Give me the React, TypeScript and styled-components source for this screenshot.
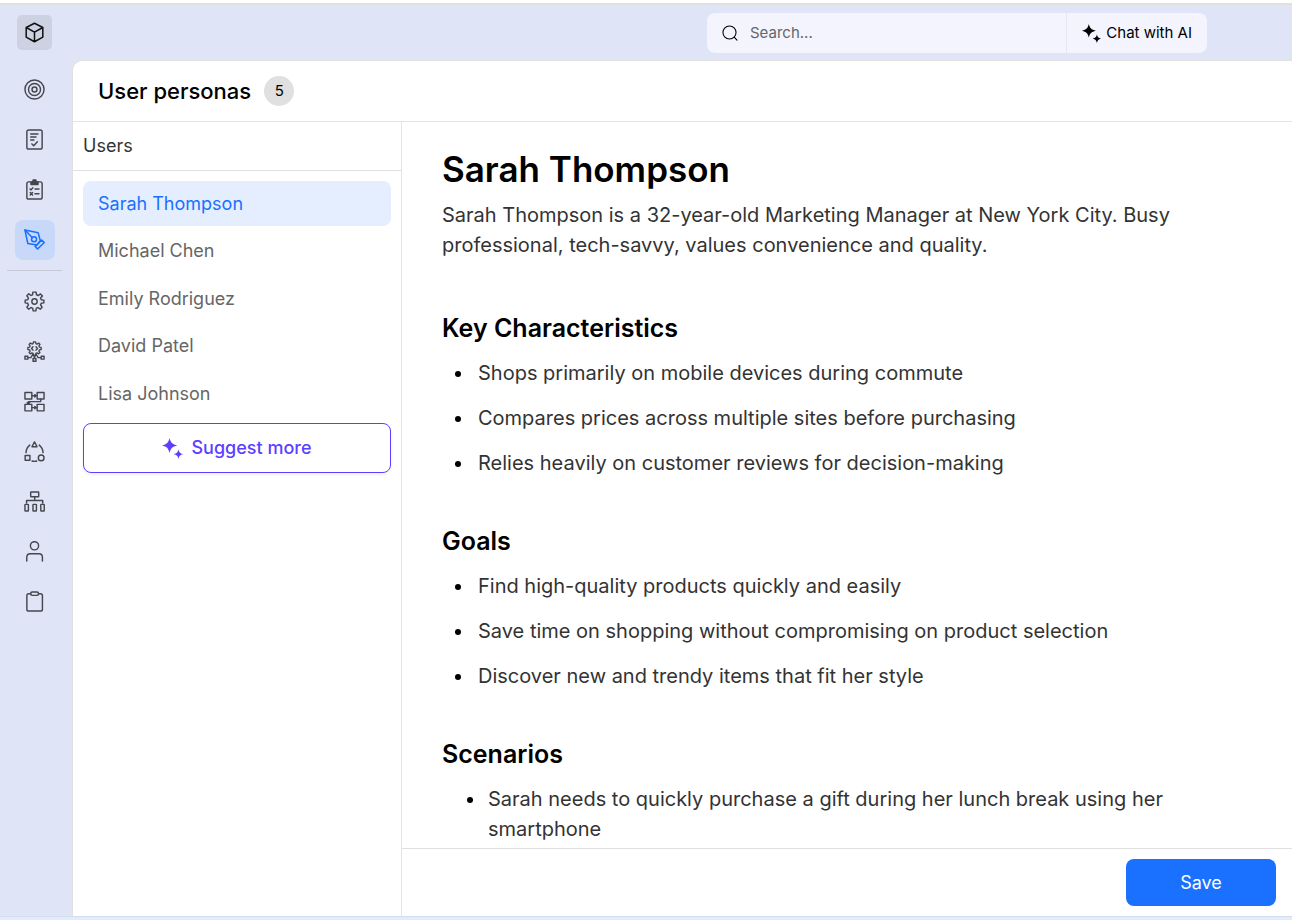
import React, { useState } from "react";
import styled, { createGlobalStyle } from "styled-components";

const GlobalStyle = createGlobalStyle`
  *, *::before, *::after { box-sizing: border-box; }
  body {
    margin: 0;
    background: #ffffff;
    font-family: Inter, "Liberation Sans", sans-serif;
    color: #000000;
  }
  button, input { font-family: inherit; }
`;

const Page = styled.div`
  display: flex;
  flex-direction: column;
  height: 100vh;
  border-top: 3px solid #ffffff;
  border-bottom: 3px solid #e3ecf8;
`;

const Shell = styled.div`
  flex: 1;
  min-height: 0;
  display: flex;
  background: #dfe4f6;
  border-top: 2px solid #e0e0e0;
  border-bottom: 1px solid #d3dcee;
`;

const Sidebar = styled.nav`
  flex: none;
  width: 72px;
  padding: 10px 10px 0 7px;
  display: flex;
  flex-direction: column;
  align-items: center;
`;

const LogoButton = styled.button`
  display: grid;
  place-items: center;
  width: 35px;
  height: 35px;
  margin-bottom: 20px;
  padding: 0;
  border: 0;
  border-radius: 5px;
  background: #cdd2e3;
  color: #111111;
`;

const NavList = styled.div`
  display: flex;
  flex-direction: column;
  align-items: center;
  gap: 10px;
`;

const NavButton = styled.button<{ $active?: boolean }>`
  display: grid;
  place-items: center;
  width: 40px;
  height: 40px;
  padding: 0 1px 1px 0;
  border: 0;
  border-radius: 8px;
  background: ${(p) => (p.$active ? "#c8d8f9" : "transparent")};
  color: ${(p) => (p.$active ? "#1a70ff" : "#44474d")};
  cursor: pointer;
`;

const NavDivider = styled.hr`
  width: 55px;
  height: 1px;
  margin: 10px 0 11px;
  border: 0;
  background: #c8cada;
`;

const Column = styled.div`
  flex: 1;
  min-width: 0;
  display: flex;
  flex-direction: column;
`;

const TopBar = styled.header`
  flex: none;
  height: 55px;
  padding: 8px 85px 0 0;
  display: flex;
  justify-content: flex-end;
  align-items: flex-start;
`;

const SearchGroup = styled.div`
  display: flex;
  width: 500px;
  height: 40px;
  border-radius: 8px;
  background: #f3f4fe;
  overflow: hidden;
`;

const SearchLabel = styled.label`
  flex: 1;
  display: flex;
  align-items: center;
  gap: 12px;
  padding-left: 15px;
`;

const SearchInput = styled.input`
  flex: 1;
  min-width: 0;
  padding: 0;
  border: 0;
  outline: 0;
  background: transparent;
  font-size: 15px;
  line-height: 20px;
  color: #222222;
  &::placeholder { color: #666666; opacity: 1; }
`;

const ChatButton = styled.button`
  display: flex;
  align-items: center;
  gap: 5px;
  padding: 0 15px;
  border: 0;
  border-left: 1px solid #e4e6f3;
  background: transparent;
  font-size: 15px;
  line-height: 20px;
  color: #000000;
  cursor: pointer;
`;

const Panel = styled.main`
  flex: 1;
  min-height: 0;
  display: flex;
  flex-direction: column;
  background: #ffffff;
  border-top: 1px solid #e0e0e0;
  border-left: 1px solid #e0e0e0;
  border-top-left-radius: 10px;
`;

const PanelHeader = styled.div`
  flex: none;
  display: flex;
  align-items: center;
  gap: 13px;
  height: 61px;
  padding-left: 25px;
  border-bottom: 1px solid #e4e4e4;
`;

const PanelTitle = styled.h2`
  margin: 0;
  font-size: 22px;
  line-height: 30px;
  font-weight: 500;
`;

const Count = styled.span`
  display: grid;
  place-items: center;
  width: 30px;
  height: 30px;
  border-radius: 50%;
  background: #e0e0e0;
  font-size: 15px;
  line-height: 20px;
`;

const Split = styled.div`
  flex: 1;
  min-height: 0;
  display: flex;
`;

const UserPane = styled.aside`
  flex: none;
  width: 329px;
  border-right: 1px solid #e4e4e4;
`;

const UserPaneTitle = styled.h3`
  height: 49px;
  margin: 0;
  padding: 0 10px;
  border-bottom: 1px solid #e0e0e0;
  font-size: 18px;
  line-height: 48px;
  font-weight: 400;
  color: #333333;
`;

const UserPaneBody = styled.div`
  display: flex;
  flex-direction: column;
  gap: 7px;
  padding: 10px;
`;

const UserList = styled.div`
  display: flex;
  flex-direction: column;
  justify-content: space-between;
  height: 235px;
`;

const UserItem = styled.button<{ $active: boolean }>`
  width: 100%;
  height: 45px;
  padding: 0 15px;
  border: 0;
  border-radius: 8px;
  background: ${(p) => (p.$active ? "#e4eeff" : "transparent")};
  color: ${(p) => (p.$active ? "#1a70ff" : "#666666")};
  font-size: 18px;
  line-height: 24px;
  text-align: left;
  cursor: pointer;
`;

const SuggestButton = styled.button`
  display: flex;
  align-items: center;
  justify-content: center;
  gap: 8px;
  height: 50px;
  border: 1px solid #5d3fff;
  border-radius: 8px;
  background: #ffffff;
  box-shadow: 0 2px 3px rgba(0, 0, 0, 0.06);
  color: #5d3fff;
  font-size: 18px;
  line-height: 24px;
  font-weight: 500;
  cursor: pointer;
`;

const Detail = styled.section`
  flex: 1;
  min-width: 0;
  display: flex;
  flex-direction: column;
`;

const DetailBody = styled.article`
  flex: 1;
  min-height: 0;
  overflow-y: auto;
  padding: 23px 40px 0;
`;

const Name = styled.h1`
  margin: 0 0 7px;
  font-size: 35px;
  line-height: 48px;
  font-weight: 600;
`;

const Summary = styled.p`
  margin: 0 0 52px;
  font-size: 20px;
  line-height: 30px;
  color: #333333;
`;

const Block = styled.section`
  & + & { margin-top: 47px; }
`;

const BlockTitle = styled.h2`
  margin: 0 0 14px;
  font-size: 25px;
  line-height: 32px;
  font-weight: 600;
`;

const Bullets = styled.ul<{ $nested?: boolean }>`
  display: flex;
  flex-direction: column;
  gap: 15px;
  margin: 0;
  padding: 0 0 0 ${(p) => (p.$nested ? 44 : 32)}px;
  font-size: 20px;
  line-height: 30px;
  color: #333333;
  li { padding-left: ${(p) => (p.$nested ? 2 : 4)}px; }
  li::marker { color: #000000; }
`;

const Footer = styled.footer`
  flex: none;
  display: flex;
  justify-content: flex-end;
  padding: 10px 16px;
  border-top: 1px solid #e0e0e0;
`;

const SaveButton = styled.button`
  width: 150px;
  height: 47px;
  border: 0;
  border-radius: 8px;
  background: #1a70ff;
  color: #ffffff;
  font-size: 18px;
  line-height: 24px;
  cursor: pointer;
`;

const Glyph = ({ children, size = 21, width = 1.5 }: { children: React.ReactNode; size?: number; width?: number }) => (
  <svg width={size} height={size} viewBox="0 0 22 22" fill="none" stroke="currentColor" strokeWidth={width} strokeLinejoin="round" strokeLinecap="round" aria-hidden="true">
    {children}
  </svg>
);

const Sparkles = ({ size }: { size: number }) => (
  <svg width={size} height={size} viewBox="0 0 20 20" fill="currentColor" aria-hidden="true">
    <path d="M7.2 0C8.4 4.6 9.8 6 14.6 7.1C9.8 8.2 8.4 9.6 7.2 14.2C6 9.6 4.6 8.2 0 7.1C4.6 6 6 4.6 7.2 0Z" />
    <path d="M15.7 11C16.4 13.8 17.2 14.7 20 15.4C17.2 16.1 16.4 17 15.7 20C15 17 14.2 16.1 11.2 15.4C14.2 14.7 15 13.8 15.7 11Z" />
  </svg>
);

const GEAR = "M9.4 1.2H12.6L13.1 3.8L14.9 4.6L17.2 3.1L19.1 5L17.5 7.2L18.2 9L20.8 9.5V12.5L18.2 13L17.5 14.8L19 17L17 19L14.8 17.5L13 18.2L12.5 20.8H9.5L9 18.2L7.2 17.5L5 19L3 17L4.5 14.8L3.8 13L1.2 12.5V9.5L3.8 9L4.5 7.2L3 5L5 3L7.2 4.5L8.9 3.8Z";

const primaryNav = [
  {
    label: "Goals",
    icon: <Glyph><circle cx="11" cy="11" r="10" /><circle cx="11" cy="11" r="6.3" /><circle cx="11" cy="11" r="2.6" /></Glyph>,
  },
  {
    label: "Requirements",
    icon: <Glyph><rect x="3" y="1" width="16" height="20" rx="2" /><path d="M7 5.3H14.6M7 8.4H12.6M7 11.5H10.4M8.3 15.6L10.2 17.6L14 13.3" /></Glyph>,
  },
  {
    label: "Tasks",
    icon: (
      <Glyph>
        <path d="M7 3H5Q3 3 3 5V19Q3 21 5 21H17Q19 21 19 19V5Q19 3 17 3H15" />
        <path d="M7.3 3H9L9.6 1H12.4L13 3H14.7V5.8H7.3Z" fill="currentColor" />
        <path d="M6.3 10.4L7.4 11.4L9.2 9.2M11.5 10.4H15.7M6.5 14.2L9 16.8M9 14.2L6.5 16.8M11.5 15.5H15.7" />
      </Glyph>
    ),
  },
  {
    label: "Design",
    icon: (
      <Glyph width={1.6}>
        <path d="M1 1.1L4 15.2L13.5 16.8L17.1 12.3L14.8 3.9Z" />
        <path d="M1 1.1L8.8 9.2" />
        <circle cx="10.5" cy="10.8" r="2.6" />
        <path d="M18.6 11.5L21.2 14.2L14.2 21L11.7 18.2Z" />
      </Glyph>
    ),
  },
];

const secondaryNav = [
  { label: "Settings", icon: <Glyph><path d="M9.3 1.2H12.7L13.1 4Q14 4.2 14.8 4.8L17.3 3.1L19.3 5.2L17.3 7.4Q17.8 8.2 18 9.1L20.8 9.6V12.4L18 12.9Q17.8 13.8 17.3 14.6L19 17L17 19L14.6 17.3Q13.8 17.8 12.9 18L12.4 20.8H9.6L9.1 18Q8.2 17.8 7.4 17.3L5 19L3 17L4.7 14.6Q4.2 13.8 4 12.9L1.2 12.4V9.6L4 9.1Q4.2 8.2 4.7 7.4L3 5L5 3L7.4 4.7Q8.2 4.2 8.9 4Z" /><circle cx="11" cy="11" r="2.8" /></Glyph> },
  {
    label: "Services",
    icon: (
      <Glyph>
        <g transform="translate(3.2 0) scale(0.71)" strokeWidth="2"><path d={GEAR} /></g>
        <path d="M9.4 6L7.9 7.8L9.4 9.6M12.6 6L14.1 7.8L12.6 9.6" />
        <path d="M4.3 17.4H7.2L8.5 15.2M17.7 17.4H14.8L13.5 15.2M9 14.2L11 16.4L13 14.2M11 16.4V18.2" />
        <rect x="1" y="16" width="3" height="3" /><rect x="18" y="16" width="3" height="3" /><rect x="9.5" y="18.3" width="3" height="3" />
      </Glyph>
    ),
  },
  {
    label: "Workflow",
    icon: (
      <Glyph>
        <rect x="1" y="1.5" width="7.2" height="6.8" /><rect x="13.8" y="1.5" width="7.2" height="6.8" />
        <rect x="1" y="14" width="7.2" height="6.8" /><rect x="13.8" y="14" width="7.2" height="6.8" />
        <path d="M8.5 5H13M11.3 3.8L12.6 5L11.3 6.2M8.5 17.4H13M11.3 16.2L12.6 17.4L11.3 18.6M17.5 8.5V11.1H4.6V13.3M3.3 12.4L4.6 13.5L5.9 12.4" />
      </Glyph>
    ),
  },
  {
    label: "Lifecycle",
    icon: (
      <Glyph>
        <path d="M11 1L13.7 6H8.3Z" /><rect x="1.2" y="15.2" width="5" height="5" /><circle cx="18" cy="17.7" r="3" />
        <path d="M6 4.3Q2.3 7.3 2.1 12.2M16 4.3Q19.7 7.3 20 12.2M8.5 21Q11 21.7 13.3 21" />
      </Glyph>
    ),
  },
  {
    label: "Site map",
    icon: (
      <Glyph>
        <rect x="7" y="1" width="8.4" height="5" rx="0.5" /><path d="M11.2 6V10M2.7 12.5V10H19.6V12.5" />
        <rect x="1" y="14" width="3.6" height="7" rx="0.5" /><rect x="9.4" y="14" width="3.6" height="7" rx="0.5" /><rect x="17.6" y="14" width="3.6" height="7" rx="0.5" />
      </Glyph>
    ),
  },
  { label: "Users", icon: <Glyph><circle cx="11" cy="5" r="4.3" /><path d="M2.9 21V17Q2.9 13.3 6.6 13.3H15.6Q19.3 13.3 19.3 17V21" /></Glyph> },
  { label: "Clipboard", icon: <Glyph><path d="M7 2.8H5Q3 2.8 3 4.8V19Q3 21 5 21H17.3Q19.3 21 19.3 19V4.8Q19.3 2.8 17.3 2.8H15.2" /><rect x="7" y="1" width="8.2" height="3.6" rx="1.6" /></Glyph> },
];

const users = ["Sarah Thompson", "Michael Chen", "Emily Rodriguez", "David Patel", "Lisa Johnson"];

const blocks = [
  {
    title: "Key Characteristics",
    nested: false,
    items: [
      "Shops primarily on mobile devices during commute",
      "Compares prices across multiple sites before purchasing",
      "Relies heavily on customer reviews for decision-making",
    ],
  },
  {
    title: "Goals",
    nested: false,
    items: [
      "Find high-quality products quickly and easily",
      "Save time on shopping without compromising on product selection",
      "Discover new and trendy items that fit her style",
    ],
  },
  {
    title: "Scenarios",
    nested: true,
    items: ["Sarah needs to quickly purchase a gift during her lunch break using her smartphone"],
  },
];

export default function App() {
  const [selected, setSelected] = useState(users[0]);
  return (
    <Page>
      <GlobalStyle />
      <Shell>
        <Sidebar aria-label="Main">
          <LogoButton aria-label="Home">
            <Glyph width={1.6}>
              <path d="M11 1.3L19.7 5.8V15.8L11 20.7L2.3 15.8V5.8ZM2.3 5.8L11 10.6L19.7 5.8M11 10.6V20.7" />
            </Glyph>
          </LogoButton>
          <NavList>
            {primaryNav.map((n) => (
              <NavButton key={n.label} aria-label={n.label} $active={n.label === "Design"}>{n.icon}</NavButton>
            ))}
          </NavList>
          <NavDivider />
          <NavList>
            {secondaryNav.map((n) => (
              <NavButton key={n.label} aria-label={n.label}>{n.icon}</NavButton>
            ))}
          </NavList>
        </Sidebar>
        <Column>
          <TopBar>
            <SearchGroup>
              <SearchLabel>
                <Glyph size={16}><circle cx="10.3" cy="10.3" r="9" /><path d="M16.8 16.8L20.6 20.8" /></Glyph>
                <SearchInput type="text" placeholder="Search..." aria-label="Search" />
              </SearchLabel>
              <ChatButton><Sparkles size={19} />Chat with AI</ChatButton>
            </SearchGroup>
          </TopBar>
          <Panel>
            <PanelHeader>
              <PanelTitle>User personas</PanelTitle>
              <Count>5</Count>
            </PanelHeader>
            <Split>
              <UserPane>
                <UserPaneTitle>Users</UserPaneTitle>
                <UserPaneBody>
                  <UserList>
                    {users.map((u) => (
                      <UserItem key={u} $active={u === selected} onClick={() => setSelected(u)}>{u}</UserItem>
                    ))}
                  </UserList>
                  <SuggestButton><Sparkles size={21} />Suggest more</SuggestButton>
                </UserPaneBody>
              </UserPane>
              <Detail>
                <DetailBody>
                  <Name>Sarah Thompson</Name>
                  <Summary>
                    Sarah Thompson is a 32-year-old Marketing Manager at New York City. Busy professional, tech-savvy, values convenience and quality.
                  </Summary>
                  {blocks.map((b) => (
                    <Block key={b.title}>
                      <BlockTitle>{b.title}</BlockTitle>
                      <Bullets $nested={b.nested}>
                        {b.items.map((t) => <li key={t}>{t}</li>)}
                      </Bullets>
                    </Block>
                  ))}
                </DetailBody>
                <Footer><SaveButton>Save</SaveButton></Footer>
              </Detail>
            </Split>
          </Panel>
        </Column>
      </Shell>
    </Page>
  );
}
